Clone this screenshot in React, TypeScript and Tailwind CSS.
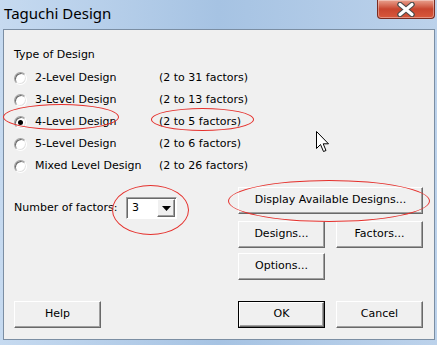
import React from "react";

const font = { fontFamily: '"DejaVu Sans", Tahoma, sans-serif' };

function Radio({ checked }: { checked?: boolean }) {
  return (
    <span className="relative w-[13px] h-[13px] shrink-0 rounded-full border border-t-[#a0a0a0] border-l-[#a0a0a0] border-b-white border-r-white bg-white shadow-[inset_1px_1px_0_#696969,inset_-1px_-1px_0_#e3e3e3] flex items-center justify-center">
      {checked && <span className="w-[5px] h-[5px] rounded-full bg-black" />}
    </span>
  );
}

function Btn({ children, w = "w-[87px]", isDefault }: { children: React.ReactNode; w?: string; isDefault?: boolean }) {
  return (
    <div className={`${w} h-[27px] ${isDefault ? "border border-black" : ""}`}>
      <div className="w-full h-full border border-t-white border-l-white border-b-[#696969] border-r-[#696969] bg-[#f0f0f0] shadow-[inset_-1px_-1px_0_#a0a0a0] flex items-center justify-center text-[11px] text-black">
        {children}
      </div>
    </div>
  );
}

const designs = [
  ["2-Level Design", "(2 to 31 factors)"],
  ["3-Level Design", "(2 to 13 factors)"],
  ["4-Level Design", "(2 to 5 factors)"],
  ["5-Level Design", "(2 to 6 factors)"],
  ["Mixed Level Design", "(2 to 26 factors)"],
];

export default function App() {
  return (
    <div className="relative w-[437px] h-[345px] flex flex-col bg-gradient-to-r from-[#c6daf0] via-[#a6c3e3] to-[#bcd2eb] overflow-hidden" style={font}>
      {/* title bar */}
      <div className="h-[29px] flex items-start justify-between shrink-0">
        <span className="pl-[4px] pt-[3px] text-[15px] leading-[20px] text-black" style={{ fontFamily: '"Noto Sans", "Open Sans", sans-serif' }}>
          Taguchi Design
        </span>
        <div className="mr-[2px] w-[58px] h-[19px] rounded-b-[4px] border border-t-0 border-[#7a2b20] bg-gradient-to-b from-[#e8a08e] via-[#c8452f] to-[#d8583c] flex items-center justify-center shadow-[inset_0_0_0_1px_rgba(255,255,255,0.35)]">
          <svg width="20" height="15" viewBox="0 0 20 15">
            <path d="M4 2.5 L16 12.5 M16 2.5 L4 12.5" stroke="#4a4a4a" strokeWidth="5.5" strokeLinecap="round" />
            <path d="M4 2.5 L16 12.5 M16 2.5 L4 12.5" stroke="#ffffff" strokeWidth="3.2" strokeLinecap="round" />
          </svg>
        </div>
      </div>

      {/* client area */}
      <div className="ml-[3px] mr-[2px] mb-[5px] flex-1 border border-[#7b8ea3] bg-[#f0f0f0] flex flex-col pl-[10px] pr-[11px] pt-[17px] pb-[11px] text-[11px] text-black">
        <div className="h-[16px] leading-[16px]">Type of Design</div>
        <div className="mt-[4px] flex flex-col">
          {designs.map(([name, range], i) => (
            <div key={name} className="h-[22px] flex items-center">
              <Radio checked={i === 2} />
              <span className="ml-[8px] w-[124px]">{name}</span>
              <span>{range}</span>
            </div>
          ))}
        </div>

        <div className="mt-[10px] flex">
          <div className="flex-1 pt-[10px]">
            <div className="flex items-center h-[22px]">
              <span className="w-[112px]">Number of factors:</span>
              <div className="w-[51px] h-[22px] border border-t-[#a0a0a0] border-l-[#a0a0a0] border-b-white border-r-white shadow-[inset_1px_1px_0_#696969] bg-white flex items-center">
                <span className="flex-1 pl-[5px]">3</span>
                <div className="w-[18px] h-[18px] mr-[1px] border border-t-white border-l-white border-b-[#696969] border-r-[#696969] bg-[#f0f0f0] shadow-[inset_-1px_-1px_0_#a0a0a0] flex items-center justify-center">
                  <svg width="9" height="5" viewBox="0 0 9 5">
                    <path d="M0 0 H9 L4.5 5 Z" fill="#000" />
                  </svg>
                </div>
              </div>
            </div>
          </div>
          <div className="w-[185px] flex flex-col">
            <Btn w="w-[185px]">Display Available Designs...</Btn>
            <div className="mt-[7px] flex justify-between">
              <Btn>Designs...</Btn>
              <Btn>Factors...</Btn>
            </div>
            <div className="mt-[5px]">
              <Btn>Options...</Btn>
            </div>
          </div>
        </div>

        <div className="mt-auto flex items-end">
          <Btn>Help</Btn>
          <div className="ml-auto flex gap-[11px]">
            <Btn isDefault>OK</Btn>
            <Btn>Cancel</Btn>
          </div>
        </div>
      </div>

      {/* annotations */}
      <div className="absolute left-[3px] top-[104px] w-[116px] h-[26px] rounded-[50%] border border-[#e5302c]" />
      <div className="absolute left-[151px] top-[108px] w-[103px] h-[23px] rounded-[50%] border border-[#e5302c]" />
      <div className="absolute left-[112px] top-[185px] w-[77px] h-[50px] rounded-[50%] border border-[#e5302c]" />
      <div className="absolute left-[228px] top-[180px] w-[202px] h-[42px] rounded-[50%] border border-[#e5302c]" />

      {/* mouse cursor */}
      <svg className="absolute left-[316px] top-[131px]" width="16" height="24" viewBox="0 0 16 24">
        <path d="M0.5 0.5 V17.5 L4.5 13.5 L7.5 20.5 L10 19.5 L7.2 12.8 L12.5 12.8 Z" fill="#fff" stroke="#000" strokeWidth="1" />
      </svg>
    </div>
  );
}
